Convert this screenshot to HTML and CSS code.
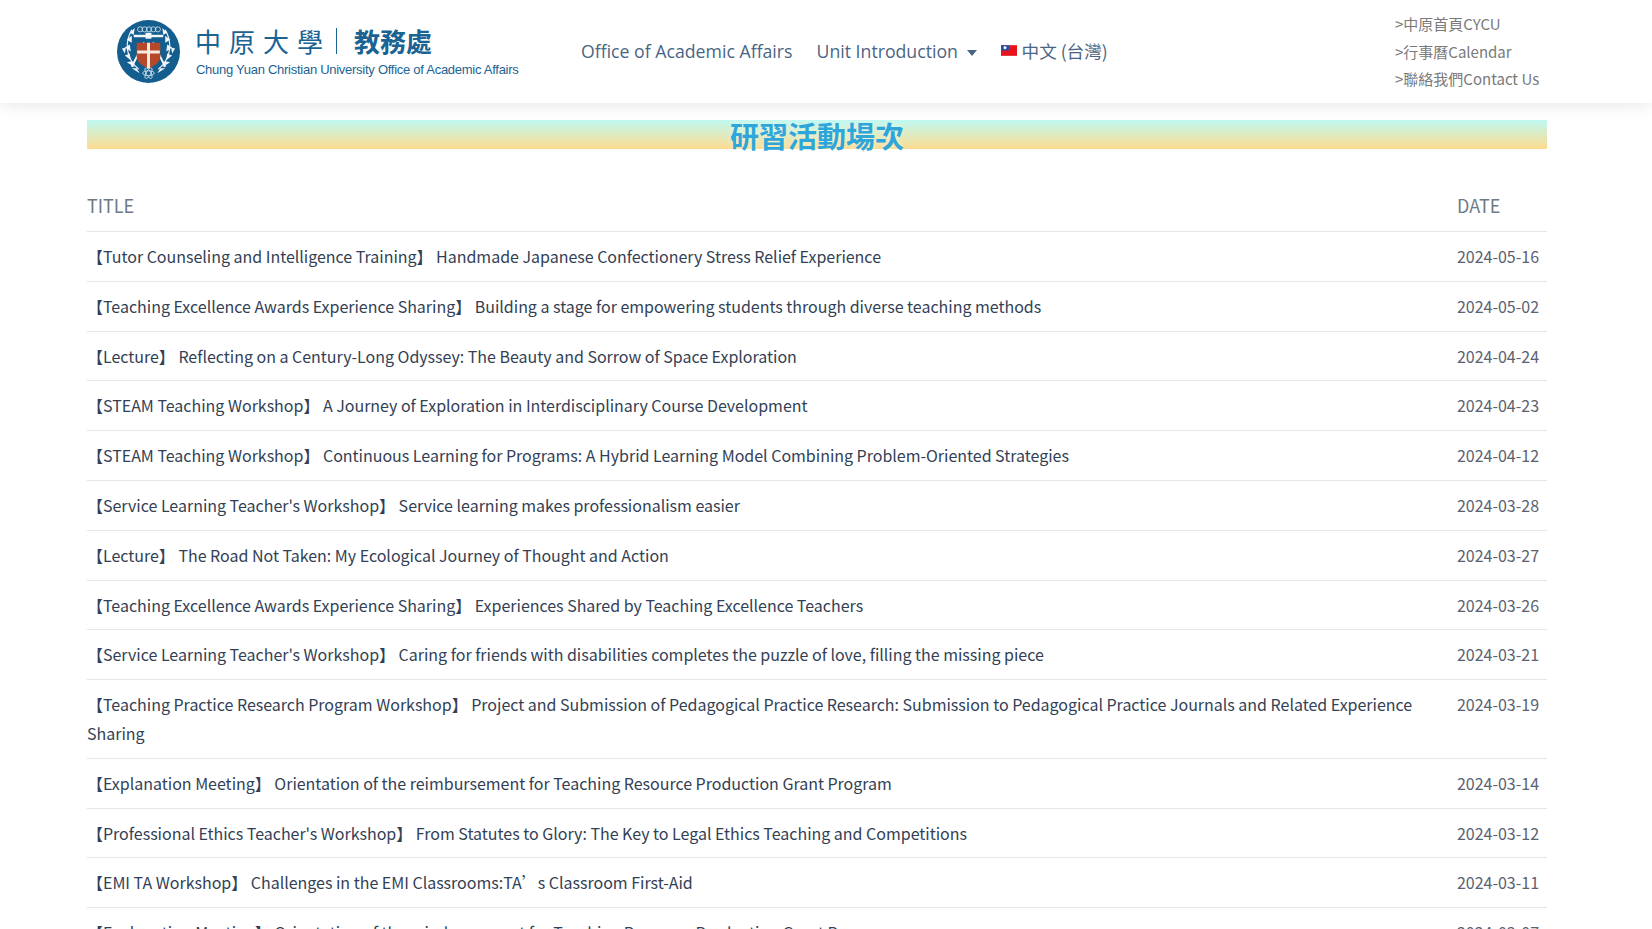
FILE: index.html
```html
<!DOCTYPE html>
<html lang="en">
<head>
    <meta charset="UTF-8">
    <meta name="viewport" content="width=device-width, initial-scale=1.0">
    <title>研習活動場次</title>
    <link rel="stylesheet" href="styles.css">
</head>
<body>
    <header class="site-header">
        <a class="logo" href="#">
            <svg class="logo-badge" viewBox="0 0 64 64" width="63" height="63" aria-hidden="true">
                <circle cx="32" cy="32" r="32" fill="#145d8f"/>
                <g fill="none" stroke="#dfe9f0" stroke-width="0.8">
                    <circle cx="23.500" cy="9.500" r="2.600"/>
                    <circle cx="28" cy="9.500" r="2.600"/>
                    <circle cx="32.500" cy="9.500" r="2.600"/>
                    <circle cx="37" cy="9.500" r="2.600"/>
                    <circle cx="41.500" cy="9.500" r="2.600"/>
                    <ellipse cx="32" cy="54" rx="6" ry="2.400"/>
                    <ellipse cx="32" cy="54" rx="6" ry="2.400" transform="rotate(60 32 54)"/>
                    <ellipse cx="32" cy="54" rx="6" ry="2.400" transform="rotate(120 32 54)"/>
                </g>
                <g fill="none" stroke="#f2f6f9" stroke-width="1.200">
                    <path d="M15 10 C8 22 8 38 22 50"/>
                    <path d="M49 10 C56 22 56 38 42 50"/>
                </g>
                <g fill="#f2f6f9">
                    <path d="M13 13l5-5-1 7zM10 20l5-4 0 7zM8 28l5-3 1 7zM8 36l5-2 1 7zM10 43l5-1 3 6zM15 49l5 0 3 5z"/>
                    <path d="M51 13l-5-5 1 7zM54 20l-5-4 0 7zM56 28l-5-3-1 7zM56 36l-5-2-1 7zM54 43l-5-1-3 6zM49 49l-5 0-3 5z"/>
                    <path d="M5 29l4-1-1 6zM59 29l-4-1 1 6z"/>
                    <rect x="17" y="15" width="30" height="2.500"/>
                    <rect x="29" y="13" width="6" height="6"/>
                    <path d="M14 47l13-25 1 1-12 25zM50 47l-13-25-1 1 12 25z"/>
                </g>
                <path d="M20 23h24v14c0 6-7 10-12 12-5-2-12-6-12-12z" fill="#b5492a"/>
                <path d="M30.500 23h3v8h10v3h-10v15h-3v-15h-10v-3h10z" fill="#f7ecdf"/>
            </svg>
            <span class="logo-text">
                <span class="logo-cn"><span class="logo-school">中原大學</span><span class="logo-unit">教務處</span></span>
                <span class="logo-en">Chung Yuan Christian University Office of Academic Affairs</span>
            </span>
        </a>
        <nav class="main-nav">
            <a href="#">Office of Academic Affairs</a>
            <a href="#">Unit Introduction <span class="caret"></span></a>
            <a class="lang" href="#">
                <svg class="flag" viewBox="0 0 15 10" width="16" height="11" aria-hidden="true">
                    <rect width="15" height="10" fill="#e8141c"/>
                    <rect width="7.500" height="5" fill="#2b4fa8"/>
                    <circle cx="3.750" cy="2.500" r="1.400" fill="#fff"/>
                </svg>
                中文 (台灣)
            </a>
        </nav>
        <ul class="quick-links">
            <li><a href="#">&gt;中原首頁CYCU</a></li>
            <li><a href="#">&gt;行事曆Calendar</a></li>
            <li><a href="#">&gt;聯絡我們Contact Us</a></li>
        </ul>
    </header>

    <main class="content">
        <h1 class="page-title">研習活動場次</h1>
        <table class="events">
            <thead>
                <tr><th>TITLE</th><th class="date">DATE</th></tr>
            </thead>
            <tbody>
                <tr><td>【Tutor Counseling and Intelligence Training】 Handmade Japanese Confectionery Stress Relief Experience</td><td class="date">2024-05-16</td></tr>
                <tr><td>【Teaching Excellence Awards Experience Sharing】 Building a stage for empowering students through diverse teaching methods</td><td class="date">2024-05-02</td></tr>
                <tr><td>【Lecture】 Reflecting on a Century-Long Odyssey: The Beauty and Sorrow of Space Exploration</td><td class="date">2024-04-24</td></tr>
                <tr><td>【STEAM Teaching Workshop】 A Journey of Exploration in Interdisciplinary Course Development</td><td class="date">2024-04-23</td></tr>
                <tr><td>【STEAM Teaching Workshop】 Continuous Learning for Programs: A Hybrid Learning Model Combining Problem-Oriented Strategies</td><td class="date">2024-04-12</td></tr>
                <tr><td>【Service Learning Teacher's Workshop】 Service learning makes professionalism easier</td><td class="date">2024-03-28</td></tr>
                <tr><td>【Lecture】 The Road Not Taken: My Ecological Journey of Thought and Action</td><td class="date">2024-03-27</td></tr>
                <tr><td>【Teaching Excellence Awards Experience Sharing】 Experiences Shared by Teaching Excellence Teachers</td><td class="date">2024-03-26</td></tr>
                <tr><td>【Service Learning Teacher's Workshop】 Caring for friends with disabilities completes the puzzle of love, filling the missing piece</td><td class="date">2024-03-21</td></tr>
                <tr><td>【Teaching Practice Research Program Workshop】 Project and Submission of Pedagogical Practice Research: Submission to Pedagogical Practice Journals and Related Experience Sharing</td><td class="date">2024-03-19</td></tr>
                <tr><td>【Explanation Meeting】 Orientation of the reimbursement for Teaching Resource Production Grant Program</td><td class="date">2024-03-14</td></tr>
                <tr><td>【Professional Ethics Teacher's Workshop】 From Statutes to Glory: The Key to Legal Ethics Teaching and Competitions</td><td class="date">2024-03-12</td></tr>
                <tr><td>【EMI TA Workshop】 Challenges in the EMI Classrooms:TA’s Classroom First-Aid</td><td class="date">2024-03-11</td></tr>
                <tr><td>【Explanation Meeting】 Orientation of the reimbursement for Teaching Resource Production Grant Program</td><td class="date">2024-03-07</td></tr>
            </tbody>
        </table>
    </main>
</body>
</html>
```

FILE: styles.css
```css
html, body {
    height: 100%;
}
body {
    margin: 0;
    overflow: hidden;
    background-color: #ffffff;
    color: #333f55;
    font-family: "Noto Sans CJK TC", "Noto Sans", sans-serif;
}
a {
    color: inherit;
    text-decoration: none;
}

/* Header */
.site-header {
    display: flex;
    align-items: center;
    height: 103px;
    padding: 0 40px 0 117px;
    box-sizing: border-box;
    background-color: #ffffff;
    box-shadow: 0 0 18px rgba(0, 0, 0, 0.12);
    position: relative;
}
.logo {
    display: flex;
    align-items: center;
    gap: 15px;
    width: 464px;
    flex-shrink: 0;
}
.logo-badge {
    flex-shrink: 0;
}
.logo-text {
    display: flex;
    flex-direction: column;
    gap: 5px;
    margin-top: -2px;
}
.logo-cn {
    display: flex;
    align-items: center;
    color: #1b6393;
    line-height: 32px;
}
.logo-school {
    font-size: 26px;
    letter-spacing: 8px;
    padding-right: 5px;
    margin-right: 17px;
    border-right: 1px solid #1b6393;
    line-height: 26px;
}
.logo-unit {
    font-size: 26px;
    font-weight: 700;
}
.logo-en {
    font-family: "Liberation Sans", Arial, sans-serif;
    font-size: 13px;
    letter-spacing: -0.27px;
    line-height: 15px;
    margin-left: 1px;
    color: #1b6393;
    white-space: nowrap;
}
.main-nav {
    display: flex;
    align-items: center;
    gap: 24px;
    margin-top: -1px;
    font-family: "Open Sans", sans-serif;
    font-size: 17.7px;
    color: #4a6583;
}
.caret {
    display: inline-block;
    width: 0;
    height: 0;
    margin-left: 4px;
    vertical-align: 2px;
    border-left: 5px solid transparent;
    border-right: 5px solid transparent;
    border-top: 6px solid #4a6583;
}
.lang {
    display: flex;
    align-items: center;
    gap: 5px;
    margin-top: -1px;
    font-family: "Noto Sans CJK TC", sans-serif;
    font-size: 17.6px;
}
.quick-links {
    list-style: none;
    margin: 0 0 0 auto;
    padding: 0;
    width: 217px;
    font-size: 15px;
    line-height: 27.5px;
    color: #7a7a7a;
}

/* Content */
.content {
    margin: 17px 105px 0 87px;
}
.page-title {
    margin: 0 0 32px;
    height: 29px;
    background: linear-gradient(#bff9f2, #fddb8e);
    text-align: center;
    font-size: 29px;
    line-height: 30px;
    font-weight: 700;
    color: #2ea6da;
    text-shadow: 0 0 6px rgba(255, 255, 255, 0.5);
}
.events {
    width: 100%;
    border-collapse: collapse;
    font-size: 16px;
    line-height: 28.8px;
    letter-spacing: -0.015px;
}
.events th {
    text-align: left;
    font-weight: 400;
    font-size: 18px;
    line-height: 30px;
    letter-spacing: 0;
    color: #6d7a86;
    padding: 9px 0 11px;
    border-bottom: 1px solid #e6e6e6;
}
.events td {
    padding: 10px 0;
    border-bottom: 1px solid #e6e6e6;
    vertical-align: top;
}
.events .date {
    width: 90px;
    white-space: nowrap;
    color: #5a6270;
}
.events th.date {
    color: #6d7a86;
}
```
